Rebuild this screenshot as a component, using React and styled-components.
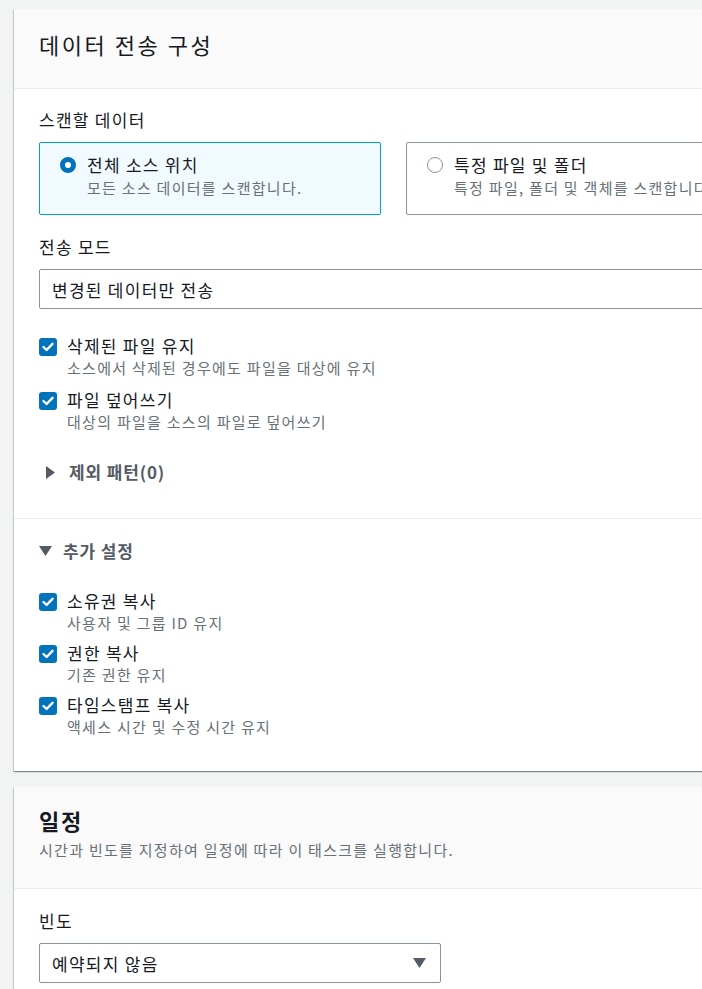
import React from "react";
import styled, { createGlobalStyle } from "styled-components";

const GlobalStyle = createGlobalStyle`
  html, body {
    margin: 0;
    padding: 0;
    overflow: hidden;
    background: #f2f3f3;
  }
  body {
    font-family: "Noto Sans CJK KR", "Noto Sans", "Liberation Sans", sans-serif;
    color: #16191f;
    letter-spacing: 0.08em;
  }
`;

const Page = styled.div`
  width: 800px;
  padding: 9px 0 40px 14px;
  display: flex;
  flex-direction: column;
  gap: 16px;
`;

const Card = styled.section`
  width: 759px;
  background: #ffffff;
  box-shadow: 0 1px 1px 0 rgba(0, 28, 36, 0.3), 1px 1px 1px 0 rgba(0, 28, 36, 0.15),
    -1px 1px 1px 0 rgba(0, 28, 36, 0.15);
`;

const CardHeader = styled.header`
  background: #fafafa;
  border-bottom: 1px solid #eaeded;
  padding: ${(p) => (p.$compact ? "20px 25px 29px" : "18px 25px 27px")};
`;

const Title = styled.h2`
  margin: 0;
  font-size: 22px;
  line-height: 30px;
  font-weight: ${(p) => (p.$bold ? 700 : 400)};
  letter-spacing: ${(p) => (p.$bold ? "0.08em" : "0.115em")};
  color: #16191f;
`;

const HeaderDesc = styled.p`
  margin: 4px 0 0;
  font-size: 15px;
  line-height: 22px;
  color: #687078;
`;

const CardBody = styled.div`
  padding: ${(p) => p.$pad || "19px 25px 34px"};
  & + & {
    border-top: 1px solid #eaeded;
  }
`;

const FieldLabel = styled.div`
  font-size: 17px;
  line-height: 24px;
  color: #16191f;
  margin-top: ${(p) => p.$top || 0}px;
`;

const Tiles = styled.div`
  display: grid;
  grid-template-columns: 342px 342px;
  gap: 25px;
  margin-top: 10px;
`;

const Tile = styled.div`
  display: flex;
  gap: 11px;
  align-items: flex-start;
  height: 73px;
  box-sizing: border-box;
  padding: 10px 20px 0;
  border: 1px solid ${(p) => (p.$active ? "#00a1c9" : "#879596")};
  border-radius: 2px;
  background: ${(p) => (p.$active ? "#f1faff" : "#ffffff")};
`;

const Radio = styled.span`
  flex: none;
  width: 16px;
  height: 16px;
  margin-top: 4px;
  box-sizing: border-box;
  border-radius: 50%;
  border: ${(p) => (p.$checked ? "5px solid #0073bb" : "1.5px solid #879596")};
  background: #ffffff;
`;

const OptionText = styled.div`
  display: flex;
  flex-direction: column;
  white-space: nowrap;
`;

const OptionTitle = styled.span`
  font-size: 17px;
  line-height: 24px;
  color: #16191f;
`;

const OptionDesc = styled.span`
  font-size: 15px;
  line-height: 22px;
  color: #687078;
`;

const Select = styled.div`
  display: flex;
  align-items: center;
  justify-content: space-between;
  width: ${(p) => p.$width || "709px"};
  height: 40px;
  box-sizing: border-box;
  margin-top: 10px;
  padding: 0 14px 0 12px;
  border: 1px solid #879596;
  border-radius: 2px;
  background: #ffffff;
  font-size: 17px;
  color: #16191f;
`;

const CheckList = styled.div`
  display: flex;
  flex-direction: column;
  gap: ${(p) => p.$gap || 9}px;
  margin-top: ${(p) => p.$top || 0}px;
`;

const CheckRow = styled.div`
  display: flex;
  gap: 10px;
  align-items: flex-start;
`;

const Box = styled.span`
  flex: none;
  width: 18px;
  height: 18px;
  margin-top: 4px;
  border-radius: 3px;
  background: #0073bb;
  display: flex;
  align-items: center;
  justify-content: center;
`;

const CheckText = styled.div`
  display: flex;
  flex-direction: column;
`;

const CheckLabel = styled.span`
  font-size: 17px;
  line-height: 24px;
  color: #16191f;
`;

const CheckDesc = styled.span`
  font-size: 15px;
  line-height: 20px;
  color: #687078;
`;

const Expander = styled.div`
  display: flex;
  align-items: center;
  gap: ${(p) => (p.$open ? 11 : 14)}px;
  padding-left: ${(p) => (p.$indent ? 7 : 0)}px;
  margin-top: ${(p) => p.$top || 0}px;
  font-size: 17px;
  line-height: 24px;
  font-weight: 700;
  letter-spacing: 0.05em;
  color: #545b64;
`;

const Caret = ({ dir }) =>
  dir === "down" ? (
    <svg width="13" height="10" viewBox="0 0 13 10">
      <path d="M0 0 H13 L6.5 10 Z" fill="#545b64" />
    </svg>
  ) : (
    <svg width="9" height="13" viewBox="0 0 9 13">
      <path d="M0 0 L9 6.5 L0 13 Z" fill="#545b64" />
    </svg>
  );

const Check = ({ label, desc }) => (
  <CheckRow>
    <Box>
      <svg width="12" height="10" viewBox="0 0 12 10">
        <path d="M1.5 5 L4.6 8 L10.5 1.8" fill="none" stroke="#fff" strokeWidth="2.4" strokeLinecap="round" strokeLinejoin="round" />
      </svg>
    </Box>
    <CheckText>
      <CheckLabel>{label}</CheckLabel>
      <CheckDesc>{desc}</CheckDesc>
    </CheckText>
  </CheckRow>
);

export default function App() {
  return (
    <>
      <GlobalStyle />
      <Page>
        <Card>
          <CardHeader $compact>
            <Title>데이터 전송 구성</Title>
          </CardHeader>
          <CardBody>
            <FieldLabel>스캔할 데이터</FieldLabel>
            <Tiles>
              <Tile $active>
                <Radio $checked />
                <OptionText>
                  <OptionTitle>전체 소스 위치</OptionTitle>
                  <OptionDesc>모든 소스 데이터를 스캔합니다.</OptionDesc>
                </OptionText>
              </Tile>
              <Tile>
                <Radio />
                <OptionText>
                  <OptionTitle>특정 파일 및 폴더</OptionTitle>
                  <OptionDesc>특정 파일, 폴더 및 객체를 스캔합니다.</OptionDesc>
                </OptionText>
              </Tile>
            </Tiles>
            <FieldLabel $top={20}>전송 모드</FieldLabel>
            <Select>변경된 데이터만 전송</Select>
            <CheckList $top={25} $gap={10}>
              <Check label="삭제된 파일 유지" desc="소스에서 삭제된 경우에도 파일을 대상에 유지" />
              <Check label="파일 덮어쓰기" desc="대상의 파일을 소스의 파일로 덮어쓰기" />
            </CheckList>
            <Expander $indent $top={28}>
              <Caret dir="right" />
              제외 패턴(0)
            </Expander>
          </CardBody>
          <CardBody $pad="20px 25px 34px">
            <Expander $open>
              <Caret dir="down" />
              추가 설정
            </Expander>
            <CheckList $top={26} $gap={8}>
              <Check label="소유권 복사" desc="사용자 및 그룹 ID 유지" />
              <Check label="권한 복사" desc="기존 권한 유지" />
              <Check label="타임스탬프 복사" desc="액세스 시간 및 수정 시간 유지" />
            </CheckList>
          </CardBody>
        </Card>
        <Card>
          <CardHeader>
            <Title $bold>일정</Title>
            <HeaderDesc>시간과 빈도를 지정하여 일정에 따라 이 태스크를 실행합니다.</HeaderDesc>
          </CardHeader>
          <CardBody $pad="20px 25px 30px">
            <FieldLabel>빈도</FieldLabel>
            <Select $width="402px">
              예약되지 않음
              <Caret dir="down" />
            </Select>
          </CardBody>
        </Card>
      </Page>
    </>
  );
}
